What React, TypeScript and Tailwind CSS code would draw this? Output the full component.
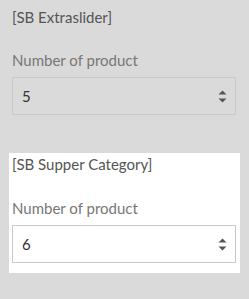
import React from "react";

function Spinner() {
  return (
    <svg width="9" height="13" viewBox="0 0 9 13" className="shrink-0">
      <path d="M4.5 0.5 L8.5 4.5 L0.5 4.5 Z" fill="#555" />
      <path d="M0.5 8.5 L8.5 8.5 L4.5 12.5 Z" fill="#555" />
    </svg>
  );
}

function NumberField({ value }: { value: string }) {
  return (
    <div className="flex h-[38px] w-[224px] items-center justify-between border border-[#c8c8c8] pl-[9px] pr-[8px] text-[15px] text-[#333]">
      <span>{value}</span>
      <Spinner />
    </div>
  );
}

export default function App() {
  return (
    <div
      className="h-[299px] w-[249px] bg-[#dadada] px-[9px]"
      style={{ fontFamily: "Lato, 'Noto Sans', sans-serif" }}
    >
      <div className="px-[3px] pt-[7px]">
        <div className="text-[15px] leading-[20px] text-[#555]">[SB Extraslider]</div>
        <div className="mt-[23px] text-[15px] leading-[20px] text-[#777]">Number of product</div>
        <div className="mt-[7px]">
          <NumberField value="5" />
        </div>
      </div>
      <div className="mt-[38px] bg-white px-[3px] pb-[10px] pt-[1px]">
        <div className="text-[15px] leading-[20px] text-[#555]">[SB Supper Category]</div>
        <div className="mt-[24px] text-[15px] leading-[20px] text-[#777]">Number of product</div>
        <div className="mt-[7px]">
          <NumberField value="6" />
        </div>
      </div>
    </div>
  );
}
